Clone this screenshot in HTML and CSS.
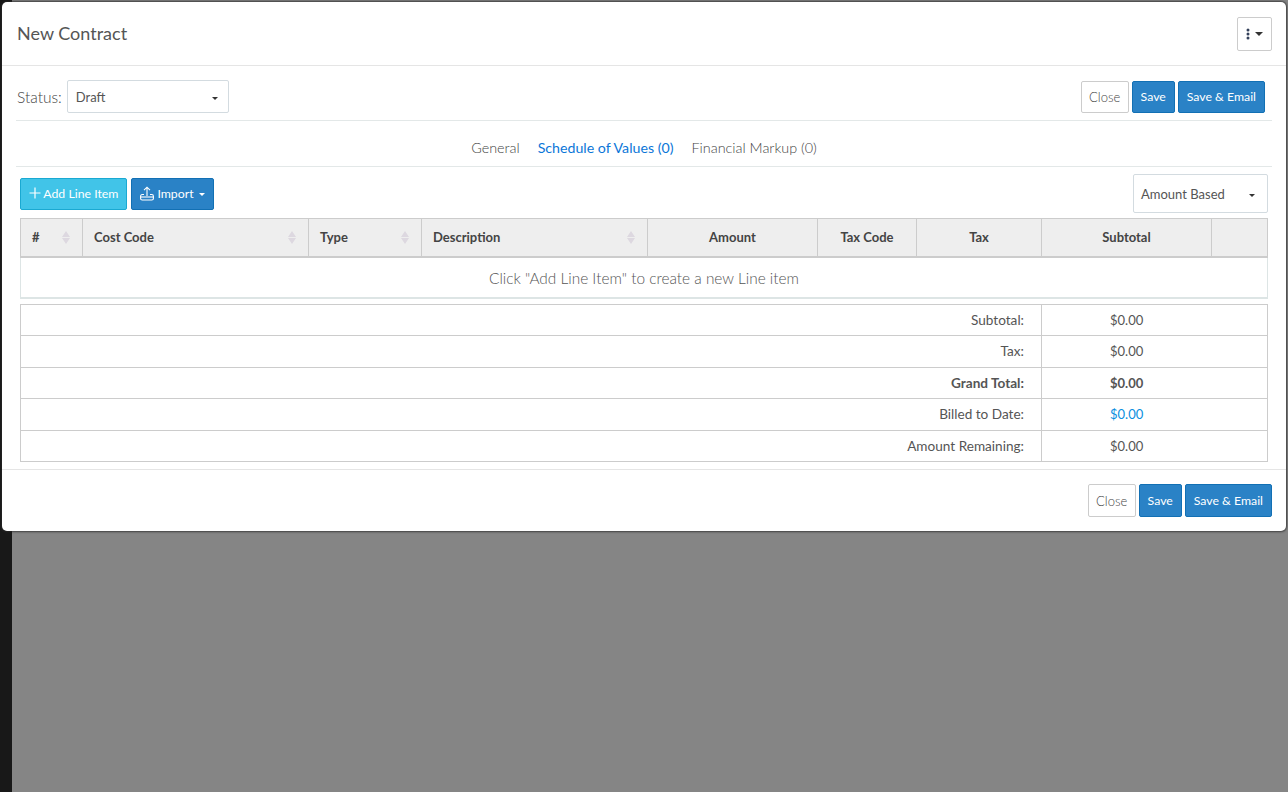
FILE: index.html
```html
<!DOCTYPE html>
<html lang="en">
<head>
    <meta charset="UTF-8">
    <meta name="viewport" content="width=device-width, initial-scale=1.0">
    <title>New Contract</title>
    <link rel="stylesheet" href="styles.css">
</head>
<body>
    <div class="backdrop">
        <div class="side-strip"></div>
        <div class="backdrop-fill"></div>
    </div>

    <div class="modal">
        <div class="modal-header">
            <h4 class="modal-title">New Contract</h4>
            <button class="btn btn-menu">
                <svg width="4" height="12" viewBox="0 0 4 12"><circle cx="2" cy="2" r="1.5" fill="#33405a"/><circle cx="2" cy="6" r="1.5" fill="#33405a"/><circle cx="2" cy="10" r="1.5" fill="#33405a"/></svg>
                <span class="caret"></span>
            </button>
        </div>

        <div class="modal-body">
            <div class="status-row">
                <div class="status-field">
                    <label class="status-label">Status:</label>
                    <div class="select select-status">Draft<span class="caret"></span></div>
                </div>
                <div class="actions">
                    <button class="btn btn-default">Close</button>
                    <button class="btn btn-primary btn-save">Save</button>
                    <button class="btn btn-primary">Save &amp; Email</button>
                </div>
            </div>

            <ul class="tabs">
                <li>General</li>
                <li class="active">Schedule of Values (0)</li>
                <li>Financial Markup (0)</li>
            </ul>

            <div class="table-toolbar">
                <div class="toolbar-left">
                    <button class="btn btn-info">
                        <svg width="12" height="12" viewBox="0 0 12 12"><path d="M6 0.5V11.5M0.5 6H11.5" stroke="#fff" stroke-width="1.2" fill="none"/></svg>
                        Add Line Item
                    </button>
                    <button class="btn btn-primary btn-import">
                        <svg width="14" height="15" viewBox="0 0 14 15" fill="none" stroke="#fff" stroke-width="1.1"><path d="M7 10V1.2M4 4.2L7 1.2L10 4.2"/><path d="M4 8.5H2.2C1.2 8.5 .6 9.3 .6 10.2V12.4C.6 13.3 1.2 14 2.2 14H11.8C12.8 14 13.4 13.3 13.4 12.4V10.2C13.4 9.3 12.8 8.5 11.8 8.5H10"/><path d="M.6 11H13.4"/></svg>
                        Import
                        <span class="caret caret-white"></span>
                    </button>
                </div>
                <div class="select select-basis">Amount Based<span class="caret"></span></div>
            </div>

            <table class="items-table">
                <colgroup>
                    <col class="col-num"><col class="col-code"><col class="col-type"><col class="col-desc">
                    <col class="col-amount"><col class="col-taxcode"><col class="col-tax"><col class="col-sub"><col>
                </colgroup>
                <thead>
                    <tr>
                        <th class="sortable">#<span class="sort"></span></th>
                        <th class="sortable">Cost Code<span class="sort"></span></th>
                        <th class="sortable">Type<span class="sort"></span></th>
                        <th class="sortable">Description<span class="sort"></span></th>
                        <th>Amount</th>
                        <th>Tax Code</th>
                        <th>Tax</th>
                        <th>Subtotal</th>
                        <th></th>
                    </tr>
                </thead>
                <tbody>
                    <tr><td colspan="9" class="empty-row">Click "Add Line Item" to create a new Line item</td></tr>
                </tbody>
            </table>

            <table class="totals-table">
                <tr><td class="total-label">Subtotal:</td><td class="total-value">$0.00</td></tr>
                <tr><td class="total-label">Tax:</td><td class="total-value">$0.00</td></tr>
                <tr class="grand"><td class="total-label">Grand Total:</td><td class="total-value">$0.00</td></tr>
                <tr><td class="total-label">Billed to Date:</td><td class="total-value link">$0.00</td></tr>
                <tr><td class="total-label">Amount Remaining:</td><td class="total-value">$0.00</td></tr>
            </table>
        </div>

        <div class="modal-footer">
            <button class="btn btn-default">Close</button>
            <button class="btn btn-primary btn-save">Save</button>
            <button class="btn btn-primary">Save &amp; Email</button>
        </div>
    </div>
</body>
</html>
```

FILE: styles.css
```css
* {
    box-sizing: border-box;
}

html, body {
    margin: 0;
    padding: 0;
    height: 100%;
    overflow: hidden;
}

body {
    font-family: Lato, "Open Sans", sans-serif;
    font-size: 14px;
    font-weight: 300;
    color: #555;
    background: #858585;
}

/* page behind the dialog */
.backdrop {
    display: flex;
    height: 792px;
}

.side-strip {
    width: 12px;
    background: #181818;
}

.backdrop-fill {
    flex-grow: 1;
    background: #858585;
}

.modal {
    position: absolute;
    top: 2px;
    left: 2px;
    width: 1284px;
    height: 529px;
    background: #fff;
    border-radius: 5px;
    box-shadow: 0 0 2px 1px rgba(40, 40, 40, 0.75);
    display: flex;
    flex-direction: column;
}

.modal-header {
    height: 64px;
    padding: 15px 14px 0 15px;
    border-bottom: 1px solid #e5e5e5;
    display: flex;
    justify-content: space-between;
    align-items: flex-start;
}

.modal-title {
    margin: 0;
    padding-top: 6px;
    font-size: 18px;
    line-height: 20px;
    font-weight: 400;
    color: #555;
}

.btn {
    font-family: inherit;
    font-size: 12.3px;
    font-weight: 400;
    line-height: 16px;
    height: 32px;
    padding: 0 8px;
    border-radius: 2px;
    border: 1px solid transparent;
    cursor: pointer;
    white-space: nowrap;
}

.btn-default {
    font-size: 13px;
    font-weight: 300;
    width: 48px;
    padding: 0;
    background: #fff;
    border-color: #ccc;
    color: #444;
}

.btn-primary {
    background: #2a82c6;
    border-color: #1270b4;
    color: #fff;
}

.btn-save {
    width: 43px;
    padding: 0;
}

.btn-info {
    background: #41c4e8;
    border-color: #1aa9d2;
    color: #fff;
    width: 107px;
    padding: 0;
}

.btn-info svg {
    vertical-align: -1px;
}

.btn-menu {
    width: 35px;
    height: 34px;
    background: #fff;
    border-color: #ccc;
    padding: 0 1px 0 0;
    display: flex;
    align-items: center;
    justify-content: center;
    gap: 5px;
}

.btn-import {
    width: 83px;
    padding: 0;
}

.btn-import svg {
    vertical-align: -3px;
}

.caret {
    display: inline-block;
    width: 0;
    height: 0;
    border-top: 4px solid #333;
    border-left: 4px solid transparent;
    border-right: 4px solid transparent;
}

.caret-white {
    border-top-color: #fff;
    border-top-width: 3px;
    border-left-width: 3px;
    border-right-width: 3px;
    margin-left: 2px;
    vertical-align: 2px;
}

.modal-body {
    flex-grow: 1;
    padding: 14px 14px 0 14px;
}

.status-row {
    height: 41px;
    padding-right: 7px;
    border-bottom: 1px solid #e3e8e8;
    display: flex;
    justify-content: space-between;
    align-items: flex-start;
}

.status-field {
    display: flex;
    align-items: center;
    gap: 5px;
    padding-left: 1px;
}

.status-label {
    font-size: 15.5px;
    color: #444;
}

.select {
    position: relative;
    background: #fff;
    border: 1px solid #d3dbe0;
    border-radius: 2px;
    font-size: 13px;
    font-weight: 400;
    color: #555;
    display: flex;
    align-items: center;
}

.select .caret {
    position: absolute;
    right: 12px;
    top: 50%;
    margin-top: 0;
    border-top-width: 3px;
    border-left-width: 3px;
    border-right-width: 3px;
}

.select-status {
    width: 162px;
    height: 33px;
    padding-left: 8px;
}

.select-status .caret {
    right: 10px;
}

.select-basis {
    width: 135px;
    height: 39px;
    padding-left: 7px;
    margin-top: -4px;
}

.actions {
    display: flex;
    gap: 3px;
    margin-top: 1px;
}

.tabs {
    list-style: none;
    margin: 0;
    padding: 8px 0 0 0;
    height: 46px;
    border-bottom: 1px solid #e3e8e8;
    display: flex;
    justify-content: center;
    align-items: center;
    gap: 18px;
    font-size: 14.4px;
    color: #444;
}

.tabs .active {
    color: #0b76d8;
    font-weight: 400;
    font-size: 14.2px;
}

.table-toolbar {
    display: flex;
    justify-content: space-between;
    align-items: flex-start;
    padding: 11px 4px 0 4px;
    height: 51px;
}

.toolbar-left {
    display: flex;
    gap: 4px;
}

.items-table,
.totals-table {
    width: 1248px;
    margin-left: 4px;
    border-collapse: collapse;
    table-layout: fixed;
}

.items-table th {
    height: 38px;
    background: #eee;
    border: 1px solid #ccc;
    border-bottom-width: 2px;
    font-size: 13px;
    font-weight: 700;
    color: #444;
    text-align: center;
    padding: 0 11px;
    position: relative;
}

.items-table th.sortable {
    text-align: left;
}

.sort {
    position: absolute;
    right: 12px;
    top: 12px;
    width: 8px;
    height: 13px;
}

.sort::before,
.sort::after {
    content: "";
    position: absolute;
    left: 0;
    border-left: 4px solid transparent;
    border-right: 4px solid transparent;
}

.sort::before {
    top: 0;
    border-bottom: 6px solid #ddd8e0;
}

.sort::after {
    bottom: 0;
    border-top: 6px solid #ddd8e0;
}

.col-num { width: 62px; }
.col-code { width: 226px; }
.col-type { width: 113px; }
.col-desc { width: 226px; }
.col-amount { width: 170px; }
.col-taxcode { width: 99px; }
.col-tax { width: 125px; }
.col-sub { width: 170px; }

.empty-row {
    height: 41px;
    padding-top: 2px;
    text-align: center;
    font-size: 15.4px;
    color: #555;
    border: 1px solid #dde5e5;
    border-top: none;
    border-bottom-width: 2px;
}

.totals-table {
    margin-top: 5px;
}

.totals-table td {
    border: 1px solid #ccc;
    height: 31.5px;
    color: #555;
    font-weight: 400;
}

.total-label {
    text-align: right;
    padding-right: 17px;
    font-size: 13.6px;
}

.totals-table td.total-value {
    width: 226px;
    text-align: left;
    padding-left: 68px;
    font-size: 13px;
}

.totals-table .grand td {
    font-weight: 700;
    color: #555;
}

.totals-table td.link {
    color: #0b8fe0;
}

.modal-footer {
    height: 62px;
    border-top: 1px solid #e5e5e5;
    padding: 14px 14px 0 0;
    display: flex;
    justify-content: flex-end;
    gap: 3px;
}

.modal-footer .btn {
    height: 33px;
}
```
